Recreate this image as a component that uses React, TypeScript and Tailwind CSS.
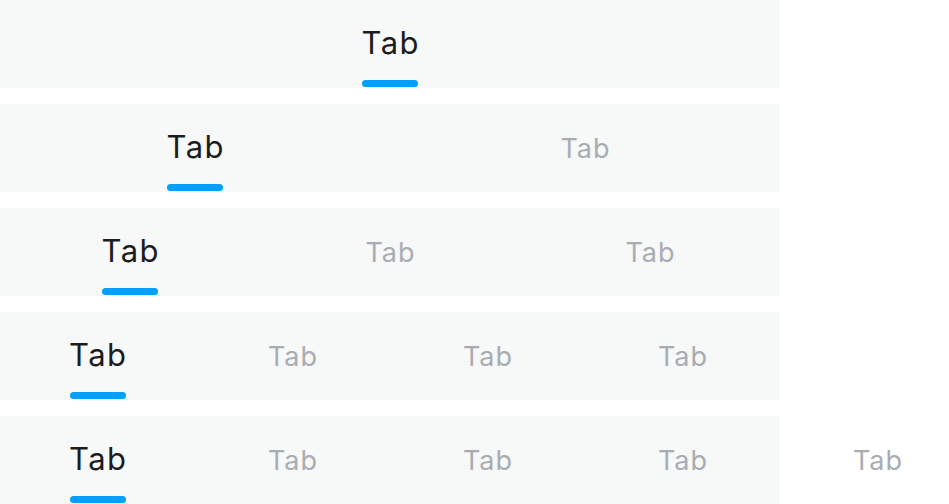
const rows = [1, 2, 3, 4, 5]

function TabBar({ count }: { count: number }) {
  const wide = count > 4
  return (
    <div className="flex h-[88px] w-[780px] bg-[#f7f8f8]">
      {Array.from({ length: count }).map((_, i) => {
        const active = i === 0
        return (
          <div
            key={i}
            className={`relative flex h-full items-center justify-center pt-[2px] ${wide ? "w-1/4 shrink-0" : "flex-1"}`}
          >
            {active ? (
              <span className="-mt-1 pl-[1.5px] text-[31px] leading-[36px] tracking-[1.5px] text-[#1b1c1e]">Tab</span>
            ) : (
              <span className="pl-[1px] text-[27px] leading-[32px] tracking-[1px] text-[#a8adb3]">Tab</span>
            )}
            {active && (
              <div className="absolute bottom-[1px] left-1/2 h-[7px] w-[56px] -translate-x-1/2 rounded-full bg-[#00a0ff]" />
            )}
          </div>
        )
      })}
    </div>
  )
}

export default function App() {
  return (
    <div className="flex h-[504px] w-[949px] flex-col gap-4 overflow-hidden bg-white font-['Inter',sans-serif]">
      {rows.map((n) => (
        <TabBar key={n} count={n} />
      ))}
    </div>
  )
}
